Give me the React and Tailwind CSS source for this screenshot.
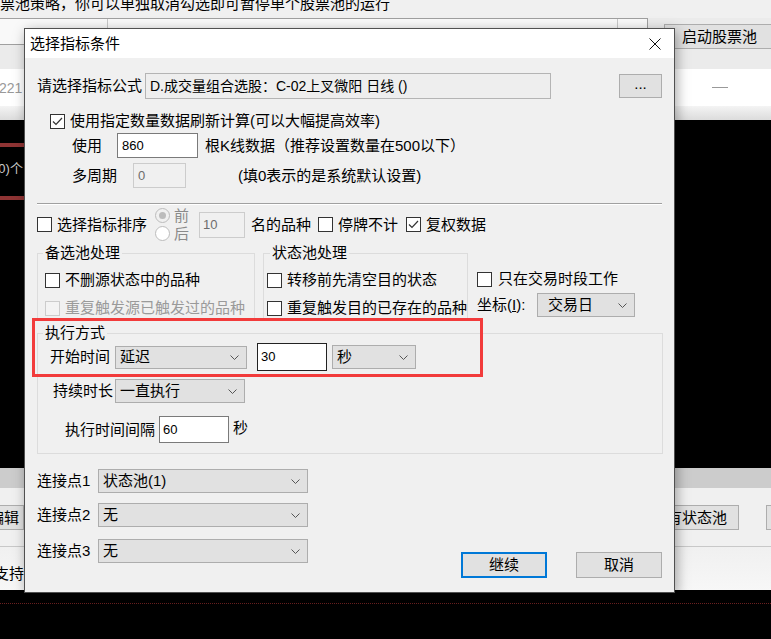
import React from 'react';

// small Win32-style controls
const Check = ({ checked, disabled }) => (
  <span className={`flex h-[15px] w-[15px] shrink-0 items-center justify-center border ${disabled ? 'border-[#cccccc] bg-[#f3f3f3]' : 'border-[#333333] bg-white'}`}>
    {checked && (
      <svg width="11" height="9" viewBox="0 0 11 9">
        <path d="M1 4.5 L4 7.5 L10 1" fill="none" stroke="#333" strokeWidth="1.2" />
      </svg>
    )}
  </span>
);

const Radio = ({ checked }) => (
  <span className={`flex h-[15px] w-[15px] shrink-0 items-center justify-center rounded-full border border-[#bcbcbc] ${checked ? 'bg-[#f0f0f0]' : 'bg-white'}`}>
    {checked && <span className="h-[7px] w-[7px] rounded-full bg-[#bcbcbc]" />}
  </span>
);

const Chevron = () => (
  <svg width="9" height="5" viewBox="0 0 9 5" className="shrink-0">
    <path d="M0.5 0.5 L4.5 4.5 L8.5 0.5" fill="none" stroke="#555" strokeWidth="1" />
  </svg>
);

const Combo = ({ className, text }) => (
  <div className={`flex shrink-0 items-center border border-[#adadad] bg-[#e1e1e1] pl-[4px] pr-[7px] ${className}`}>
    <span className="flex-1 whitespace-nowrap">{text}</span>
    <Chevron />
  </div>
);

const Button = ({ className, children }) => (
  <div className={`flex shrink-0 items-center justify-center bg-[#e1e1e1] ${className}`}>{children}</div>
);

export default function App() {
  return (
    <div className="relative h-[639px] w-[771px] overflow-hidden bg-[#f0f0f0] text-[15px] leading-[20px] text-black font-['Liberation_Sans','Noto_Sans_CJK_SC',sans-serif]">
      {/* background application */}
      <div className="flex h-full flex-col">
        <div className="h-[18px] overflow-hidden whitespace-nowrap">
          <div className="mt-[-6px]">票池策略，你可以单独取消勾选即可暂停单个股票池的运行</div>
        </div>
        <div className="flex h-[51px] items-start overflow-hidden bg-[#ebebeb]">
          <div className="flex h-[27px] w-[648px] shrink-0 border-b border-r border-t border-[#a0a0a0] bg-[#f9f9f9]">
            <div className="w-[108px] border-r border-[#c8c8c8]" />
            <div className="w-[510px] border-r border-[#c8c8c8]" />
          </div>
          <Button className="ml-[16px] mt-[6px] h-[25px] w-[120px] justify-start border border-[#adadad] pl-[17px] whitespace-nowrap">启动股票池</Button>
        </div>
        <div className="flex h-[37px] items-center bg-white">
          <span className="ml-[-1px] text-[14px] text-[#999999]">221</span>
          <div className="ml-[690px] h-px w-[16px] bg-[#999999]" />
        </div>
        <div className="h-[14px] bg-gradient-to-b from-[#f4f4f4] to-[#dcdcdc]" />
        <div className="flex h-[348px] flex-col bg-black">
          <div className="mt-[23px] h-[4px] w-[40px] bg-[#8f3434]" />
          <div className="mt-[12px] ml-[-6px] whitespace-nowrap text-[13px] text-[#c8c8c8]">(0)个</div>
          <div className="mt-[17px] h-[4px] w-[40px] bg-[#8f3434]" />
        </div>
        <div className="h-[20px] bg-[#cccccc]" />
        <div className="flex h-[58px] items-start overflow-hidden pt-[17px]">
          <Button className="ml-[-36px] h-[25px] w-[60px] justify-end border border-[#adadad] pr-[4px]">编辑</Button>
          <div className="flex-1" />
          <Button className="h-[25px] w-[100px] justify-end border border-[#adadad] pr-[11px]">有状态池</Button>
          <Button className="ml-[27px] mr-[-35px] h-[25px] w-[40px] border border-[#adadad]" />
        </div>
        <div className="flex h-[44px] items-center border-t border-[#c8c8c8] bg-gradient-to-b from-[#f0f0f0] to-[#f7f7f7]">
          <span className="ml-[-6px] mt-[10px]">支持</span>
        </div>
        <div className="flex-1 bg-black pt-[13px]">
          <div className="border-t border-dotted border-[#6b2020]" />
        </div>
      </div>

      {/* dialog window */}
      <div className="absolute left-[24px] top-[28px] flex h-[565px] w-[651px] flex-col border border-[#505050] bg-[#f0f0f0] shadow-[2px_3px_12px_rgba(0,0,0,0.35)]">
        <div className="flex h-[29px] items-center bg-white pl-[5px] pr-[13px]">
          <span className="flex-1">选择指标条件</span>
          <svg width="12" height="12" viewBox="0 0 12 12">
            <path d="M0.5 0.5 L11.5 11.5 M11.5 0.5 L0.5 11.5" stroke="#111" strokeWidth="1" />
          </svg>
        </div>

        <div className="flex flex-col px-[12px]">
          {/* formula */}
          <div className="mt-[15px] flex h-[26px] items-center">
            <span className="w-[108px]">请选择指标公式</span>
            <div className="flex h-[26px] w-[406px] items-center border border-[#b4b4b4] bg-[#eeeeee] pl-[4px] text-[14px] whitespace-nowrap">
              D.成交量组合选股：C-02上叉微阳 日线 ()
            </div>
            <Button className="ml-auto h-[24px] w-[43px] border border-[#adadad] pb-[4px]">...</Button>
          </div>

          <div className="mt-[12px] flex h-[20px] items-center">
            <span className="ml-[13px]"><Check checked /></span>
            <span className="ml-[5px] whitespace-nowrap">使用指定数量数据刷新计算(可以大幅提高效率)</span>
          </div>

          <div className="mt-[2px] flex h-[25px] items-center">
            <span className="ml-[35px] w-[45px]">使用</span>
            <div className="flex h-[25px] w-[81px] items-center border border-[#7a7a7a] bg-white pl-[4px] text-[13px]">860</div>
            <span className="ml-[7px] whitespace-nowrap">根K线数据（推荐设置数量在500以下）</span>
          </div>

          <div className="mt-[5px] flex h-[25px] items-center">
            <span className="ml-[35px] w-[61px]">多周期</span>
            <div className="flex h-[25px] w-[53px] items-center border border-[#cccccc] bg-[#f0f0f0] pl-[4px] text-[13px] text-[#6d6d6d]">0</div>
            <span className="ml-[52px] whitespace-nowrap">(填0表示的是系统默认设置)</span>
          </div>

          <div className="mt-[15px] h-[2px] border-b border-t border-b-white border-t-[#a0a0a0]" />

          {/* sort row */}
          <div className="mt-[2px] flex h-[35px] items-center whitespace-nowrap">
            <Check />
            <span className="ml-[5px] w-[90px]">选择指标排序</span>
            <div className="ml-[8px] flex h-[35px] w-[34px] flex-col justify-between text-[#8a8a8a]">
              <div className="flex h-[17px] items-center"><Radio checked /><span className="ml-[4px]">前</span></div>
              <div className="flex h-[17px] items-center"><Radio /><span className="ml-[4px]">后</span></div>
            </div>
            <div className="ml-[10px] flex h-[26px] w-[46px] items-center border border-[#cccccc] bg-[#f0f0f0] pl-[3px] text-[13px] text-[#6d6d6d]">10</div>
            <span className="ml-[6px] w-[60px]">名的品种</span>
            <span className="ml-[7px]"><Check /></span>
            <span className="ml-[5px] w-[60px]">停牌不计</span>
            <span className="ml-[8px]"><Check checked /></span>
            <span className="ml-[5px]">复权数据</span>
          </div>

          {/* pool groups */}
          <div className="mt-[1px] flex items-start whitespace-nowrap">
            <fieldset className="h-[77px] w-[218px] border border-[#dcdcdc] pl-[7px]">
              <legend className="ml-[-2px] px-[2px]">备选池处理</legend>
              <div className="mt-[7px] flex h-[20px] items-center"><Check /><span className="ml-[5px]">不删源状态中的品种</span></div>
              <div className="mt-[8px] flex h-[20px] items-center text-[#9a9a9a]"><Check disabled /><span className="ml-[5px]">重复触发源已触发过的品种</span></div>
            </fieldset>
            <fieldset className="ml-[8px] h-[77px] w-[205px] border border-[#dcdcdc] pl-[3px]">
              <legend className="ml-[3px] px-[2px]">状态池处理</legend>
              <div className="mt-[7px] flex h-[20px] items-center"><Check /><span className="ml-[5px]">转移前先清空目的状态</span></div>
              <div className="mt-[8px] flex h-[20px] items-center"><Check /><span className="ml-[5px]">重复触发目的已存在的品种</span></div>
            </fieldset>
            <div className="ml-[9px] flex flex-col">
              <div className="mt-[26px] flex h-[20px] items-center"><Check /><span className="ml-[6px]">只在交易时段工作</span></div>
              <div className="mt-[4px] flex h-[24px] items-center">
                <span className="w-[60px]">坐标(<span className="underline">I</span>):</span>
                <Combo className="h-[24px] w-[98px] pl-[10px]" text="交易日" />
              </div>
            </div>
          </div>

          {/* execution */}
          <fieldset className="mt-[3px] h-[131px] w-[626px] border border-[#dcdcdc] pl-[7px] whitespace-nowrap">
            <legend className="ml-[-2px] px-[2px]">执行方式</legend>
            <div className="flex h-[28px] items-center">
              <span className="ml-[5px] w-[60px]">开始时间</span>
              <Combo className="ml-[5px] h-[23px] w-[132px]" text="延迟" />
              <div className="ml-[10px] flex h-[28px] w-[70px] items-center border border-[#222222] bg-white pl-[3px] text-[13px]">30</div>
              <Combo className="ml-[5px] h-[24px] w-[84px]" text="秒" />
            </div>
            <div className="mt-[8px] flex h-[24px] items-center">
              <span className="ml-[8px] w-[60px]">持续时长</span>
              <Combo className="ml-[2px] h-[24px] w-[130px]" text="一直执行" />
            </div>
            <div className="mt-[13px] flex h-[27px] items-center">
              <span className="ml-[20px] w-[90px]">执行时间间隔</span>
              <div className="ml-[4px] flex h-[27px] w-[70px] items-center border border-[#7a7a7a] bg-white pl-[3px] text-[13px]">60</div>
              <span className="ml-[4px] mb-[4px]">秒</span>
            </div>
          </fieldset>

          {/* link points + buttons */}
          <div className="mt-[15px] flex items-start whitespace-nowrap">
            <div className="flex flex-col">
              <div className="flex h-[24px] items-center">
                <span className="w-[61px]">连接点1</span>
                <Combo className="h-[24px] w-[210px]" text="状态池(1)" />
              </div>
              <div className="mt-[10px] flex h-[24px] items-center">
                <span className="w-[61px]">连接点2</span>
                <Combo className="h-[24px] w-[210px]" text="无" />
              </div>
              <div className="mt-[12px] flex h-[24px] items-center">
                <span className="w-[61px]">连接点3</span>
                <Combo className="h-[24px] w-[210px]" text="无" />
              </div>
            </div>
            <div className="ml-auto mt-[83px] flex gap-[29px]">
              <Button className="h-[26px] w-[86px] border-2 border-[#0078d7]">继续</Button>
              <Button className="h-[26px] w-[86px] border border-[#adadad]">取消</Button>
            </div>
          </div>
        </div>
      </div>

      {/* annotation */}
      <div className="absolute left-[32px] top-[318px] h-[59px] w-[451px] border-[3px] border-[#f23b3b]" />
    </div>
  );
}
